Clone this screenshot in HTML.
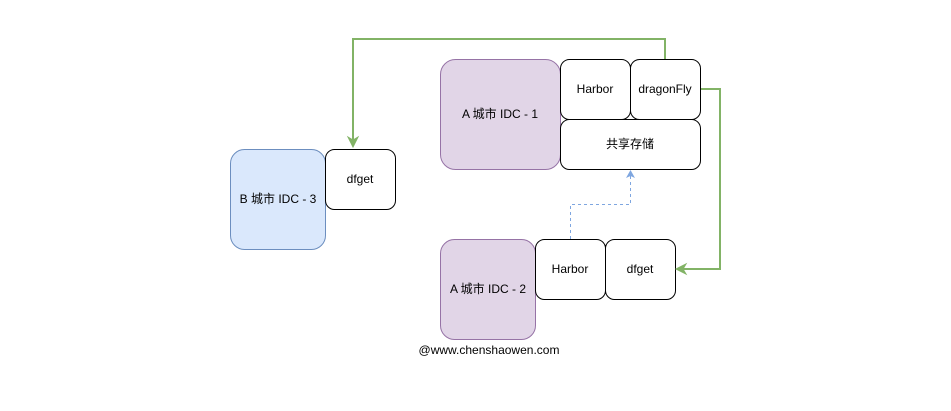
<!DOCTYPE html>
<html><head><meta charset="utf-8"><style>
body{margin:0;background:#fff;}
svg text{font-family:"Liberation Sans","Noto Sans CJK SC",sans-serif;font-size:12px;fill:#000;text-anchor:middle;dominant-baseline:central;}
</style></head><body>
<svg width="951" height="406" xmlns="http://www.w3.org/2000/svg">
<g stroke-width="1">
<rect x="440.5" y="59.5" width="120" height="110" rx="15" fill="#e1d5e7" stroke="#9673a6"/>
<rect x="560.5" y="59.5" width="70" height="60" rx="9" fill="#fff" stroke="#000"/>
<rect x="630.5" y="59.5" width="70" height="60" rx="9" fill="#fff" stroke="#000"/>
<rect x="560.5" y="119.5" width="140" height="50" rx="9" fill="#fff" stroke="#000"/>
<rect x="230.5" y="149.5" width="95" height="100" rx="14" fill="#dae8fc" stroke="#6c8ebf"/>
<rect x="325.5" y="149.5" width="70" height="60" rx="9" fill="#fff" stroke="#000"/>
<rect x="440.5" y="239.5" width="95" height="100" rx="14" fill="#e1d5e7" stroke="#9673a6"/>
<rect x="535.5" y="239.5" width="70" height="60" rx="9" fill="#fff" stroke="#000"/>
<rect x="605.5" y="239.5" width="70" height="60" rx="9" fill="#fff" stroke="#000"/>
</g>
<g fill="none" stroke="#82b366" stroke-width="2">
<path d="M665 59 V39 H353 V140"/>
<path d="M701 89 H720 V269 H682"/>
</g>
<path d="M348 137 L353 147 L358 137 L353 140 Z" fill="#82b366" stroke="#82b366"/>
<path d="M686 264 L676 269 L686 274 L683 269 Z" fill="#82b366" stroke="#82b366"/>
<path d="M570.5 239 V204.5 H630.5 V175" fill="none" stroke="#7ea6e0" stroke-dasharray="3 3"/>
<path d="M626 178 L630.5 170 L635 178 L630.5 176 Z" fill="#7ea6e0"/>
<text x="500" y="114">A 城市 IDC - 1</text>
<text x="595" y="89">Harbor</text>
<text x="665" y="89">dragonFly</text>
<text x="630" y="144">共享存储</text>
<text x="278" y="199">B 城市 IDC - 3</text>
<text x="360" y="179">dfget</text>
<text x="488" y="289">A 城市 IDC - 2</text>
<text x="570" y="269">Harbor</text>
<text x="640" y="269">dfget</text>
<text x="489" y="350">@www.chenshaowen.com</text>
</svg>
</body></html>
